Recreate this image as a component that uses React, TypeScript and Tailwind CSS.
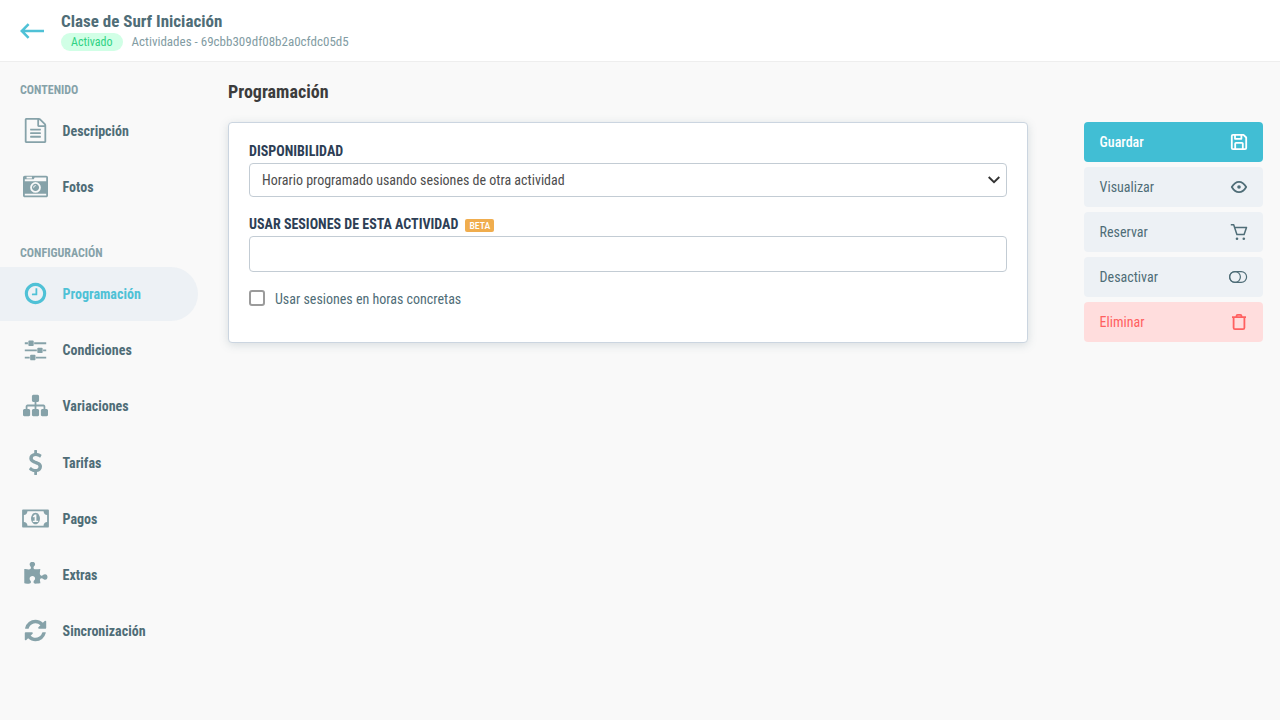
import type { ReactNode } from 'react';

const fileText =
  'M1596 380q28 28 48 76t20 88v1152q0 40-28 68t-68 28h-1344q-40 0-68-28t-28-68v-1600q0-40 28-68t68-28h896q40 0 88 20t76 48zm-444-244v376h376q-10-29-22-41l-313-313q-12-12-41-22zm384 1528v-1024h-416q-40 0-68-28t-28-68v-416h-768v1536h1280zm-1024-864q0-14 9-23t23-9h704q14 0 23 9t9 23v64q0 14-9 23t-23 9h-704q-14 0-23-9t-9-23v-64zm736 224q14 0 23 9t9 23v64q0 14-9 23t-23 9h-704q-14 0-23-9t-9-23v-64q0-14 9-23t23-9h704zm0 256q14 0 23 9t9 23v64q0 14-9 23t-23 9h-704q-14 0-23-9t-9-23v-64q0-14 9-23t23-9h704z';
const camera =
  'M928 832q0-14-9-23t-23-9q-66 0-113 47t-47 113q0 14 9 23t23 9 23-9 9-23q0-40 28-68t68-28q14 0 23-9t9-23zm224 130q0 106-75 181t-181 75-181-75-75-181 75-181 181-75 181 75 75 181zm-1024 574h1536v-128h-1536v128zm1152-574q0-159-112.5-271.5t-271.5-112.5-271.5 112.5-112.5 271.5 112.5 271.5 271.5 112.5 271.5-112.5 112.5-271.5zm-1024-642h384v-128h-384v128zm-128 192h1536v-256h-828l-64 128h-644v128zm1664-256v1280q0 53-37.5 90.5t-90.5 37.5h-1536q-53 0-90.5-37.5t-37.5-90.5v-1280q0-53 37.5-90.5t90.5-37.5h1536q53 0 90.5 37.5t37.5 90.5z';
const clock =
  'M1024 544v448q0 14-9 23t-23 9h-320q-14 0-23-9t-9-23v-64q0-14 9-23t23-9h224v-352q0-14 9-23t23-9h64q14 0 23 9t9 23zm416 352q0-148-73-273t-198-198-273-73-273 73-198 198-73 273 73 273 198 198 273 73 273-73 198-198 73-273zm224 0q0 209-103 385.5t-279.5 279.5-385.5 103-385.5-103-279.5-279.5-103-385.5 103-385.5 279.5-279.5 385.5-103 385.5 103 279.5 279.5 103 385.5z';
const sliders =
  'M480 1408v128h-352v-128h352zm352-128q26 0 45 19t19 45v256q0 26-19 45t-45 19h-256q-26 0-45-19t-19-45v-256q0-26 19-45t45-19h256zm160-384v128h-864v-128h864zm-640-512v128h-224v-128h224zm1312 1024v128h-736v-128h736zm-960-1152q26 0 45 19t19 45v256q0 26-19 45t-45 19h-256q-26 0-45-19t-19-45v-256q0-26 19-45t45-19h256zm640 512q26 0 45 19t19 45v256q0 26-19 45t-45 19h-256q-26 0-45-19t-19-45v-256q0-26 19-45t45-19h256zm320 128v128h-224v-128h224zm0-512v128h-864v-128h864z';
const sitemap =
  'M1792 1248v320q0 40-28 68t-68 28h-320q-40 0-68-28t-28-68v-320q0-40 28-68t68-28h96v-192h-512v192h96q40 0 68 28t28 68v320q0 40-28 68t-68 28h-320q-40 0-68-28t-28-68v-320q0-40 28-68t68-28h96v-192h-512v192h96q40 0 68 28t28 68v320q0 40-28 68t-68 28h-320q-40 0-68-28t-28-68v-320q0-40 28-68t68-28h96v-192q0-52 38-90t90-38h512v-192h-96q-40 0-68-28t-28-68v-320q0-40 28-68t68-28h320q40 0 68 28t28 68v320q0 40-28 68t-68 28h-96v192h512q52 0 90 38t38 90v192h96q40 0 68 28t28 68z';
const dollar =
  'M1362 1185q0 153-99.5 263.5t-258.5 136.5v175q0 14-9 23t-23 9h-135q-13 0-22.5-9.5t-9.5-22.5v-175q-66-9-127.5-31t-101.5-44.5-74-48-46.5-37.5-17.5-18q-17-21-2-41l103-135q7-10 23-12 15-2 24 9l2 2q113 99 243 125 37 8 74 8 81 0 142.5-43t61.5-122q0-28-15-53t-33.5-42-58.5-37.5-66-32-80-32.5q-39-16-61.5-25t-61.5-26.5-62.5-31-56.5-35.5-53.5-42.5-43.5-49-35.5-58-21-66.5-8.5-78q0-138 98-242t255-134v-180q0-13 9.5-22.5t22.5-9.5h135q14 0 23 9t9 23v176q57 6 110.5 23t87 33.5 63.5 37.5 39 29 15 14q17 18 5 38l-81 146q-8 15-23 16-14 3-27-7-3-3-14.5-12t-39-26.5-58.5-32-74.5-26-85.5-11.5q-95 0-155 43t-60 111q0 26 8.5 48t29.5 41.5 39.5 33 56 31 60.5 27 70 27.5q53 20 81 31.5t76 35 75.5 42.5 62 50 53 63.5 31.5 76.5 13 94z';
const money =
  'M768 1152h384v-96h-128v-448h-114l-148 137 77 80q42-37 55-57h2v288h-128v96zm512-256q0 70-21 142t-59.5 134-101.5 101-138 39-138-39-101.5-101-59.5-134-21-142 21-142 59.5-134 101.5-101 138-39 138 39 101.5 101 59.5 134 21 142zm512 256v-512q-106 0-181-75t-75-181h-1152q0 106-75 181t-181 75v512q106 0 181 75t75 181h1152q0-106 75-181t181-75zm128-832v1152q0 26-19 45t-45 19h-1792q-26 0-45-19t-19-45v-1152q0-26 19-45t45-19h1792q26 0 45 19t19 45z';
const puzzle =
  'M1755 1083q0 81-44.5 135t-123.5 54q-41 0-77.5-17.5t-59-38-56.5-38-71-17.5q-110 0-110 124 0 39 16 115t15 115v5q-22 0-33 1-34 3-97.5 11.5t-115.5 13.5-98 5q-61 0-103-26.5t-42-83.5q0-37 17.5-71t38-56.5 38-59 17.5-77.5q0-79-54-123.5t-135-44.5q-84 0-143 45.5t-59 127.5q0 43 15 83t33.5 64.5 33.5 53 15 50.5q0 45-46 89-37 35-117 35-95 0-245-24-9-2-27.5-4t-27.5-4l-13-2q-1 0-3-1-2 0-2-1v-1024q2 1 17.5 3.5t34 5 21.5 3.5q150 24 245 24 80 0 117-35 46-44 46-89 0-22-15-50.5t-33.5-53-33.5-64.5-15-83q0-82 59-127.5t144-45.5q80 0 134 44.5t54 123.5q0 41-17.5 77.5t-38 59-38 56.5-17.5 71q0 57 42 83.5t103 26.5q64 0 180-15t163-17v2q-1 2-3.5 17.5t-5 34-3.5 21.5q-24 150-24 245 0 80 35 117 44 46 89 46 22 0 50.5-15t53-33.5 64.5-33.5 83-15q82 0 127.5 59t45.5 143z';
const refresh =
  'M1639 1056q0 5-1 7-64 268-268 434.5t-478 166.5q-146 0-282.5-55t-243.5-157l-129 129q-19 19-45 19t-45-19-19-45v-448q0-26 19-45t45-19h448q26 0 45 19t19 45-19 45l-137 137q71 66 161 102t187 36q134 0 250-65t186-179q11-17 53-117 8-23 30-23h192q13 0 22.5 9.5t9.5 22.5zm25-800v448q0 26-19 45t-45 19h-448q-26 0-45-19t-19-45 19-45l138-138q-148-137-349-137-134 0-250 65t-186 179q-11 17-53 117-8 23-30 23h-199q-13 0-22.5-9.5t-9.5-22.5v-7q65-268 270-434.5t480-166.5q146 0 284 55.5t245 156.5l130-129q19-19 45-19t45 19 19 45z';

interface NavItemProps {
  icon: string;
  label: string;
  active?: boolean;
  wide?: boolean;
}

function NavItem({ icon, label, active, wide }: NavItemProps) {
  return (
    <a
      className={`flex h-[54px] w-[198px] items-center rounded-r-full pl-[22px] text-sm font-bold ${
        active ? 'bg-[#edf1f5] text-[#4fc1d6]' : 'text-[#4f6d77]'
      }`}
    >
      <span className="flex w-[27px] shrink-0 justify-center">
        <svg
          viewBox={wide ? '0 0 1920 1792' : '0 0 1792 1792'}
          className={`mb-px h-[25px] shrink-0 ${wide ? 'w-[27px]' : 'w-[25px]'} ${active ? 'text-[#4fc1d6]' : 'text-[#86a2a9]'}`}
          fill="currentColor"
        >
          <path d={icon} />
        </svg>
      </span>
      <span className="ml-[13.6px]">{label}</span>
    </a>
  );
}

interface ActionProps {
  label: string;
  color: string;
  children: ReactNode;
}

function Action({ label, color, children }: ActionProps) {
  return (
    <button className={`flex h-10 w-full items-center justify-between rounded pr-3.5 pl-[15.6px] text-sm ${color}`}>
      <span>{label}</span>
      <svg viewBox="0 0 20 20" className="size-5" fill="none" stroke="currentColor" strokeWidth="1.8" strokeLinejoin="round">
        {children}
      </svg>
    </button>
  );
}

export default function App() {
  return (
    <div className="flex h-screen flex-col bg-[#f9f9f9] font-['Roboto_Condensed','Roboto',sans-serif] [font-stretch:75%] antialiased">
      <header className="flex h-[62px] shrink-0 items-center border-b border-[#eeeeee] bg-white pl-5">
        <svg viewBox="0 0 24 16" className="h-4 w-6 text-[#4fc1d6]" fill="none" stroke="currentColor" strokeWidth="2.5">
          <path d="M24 8H2M8.6 1.2L1.8 8L8.6 14.8" />
        </svg>
        <div className="mb-0.5 ml-[17px]">
          <h1 className="text-[17px] leading-6 font-bold text-[#4f6d77]">Clase de Surf Iniciación</h1>
          <div className="flex items-center leading-[18px]">
            <span className="rounded-full bg-[#d1ffe6] px-2.5 text-xs leading-[18px] text-[#2fd283]">Activado</span>
            <span className="ml-[9px] text-[13px] text-[#829ca3]">Actividades - 69cbb309df08b2a0cfdc05d5</span>
          </div>
        </div>
      </header>

      <div className="flex flex-1">
        <nav className="w-[228px] shrink-0 pt-5">
          <h2 className="pl-5 text-xs leading-4 font-bold text-[#86a2a9]">CONTENIDO</h2>
          <div className="mt-1.5 flex flex-col gap-[2px]">
            <NavItem icon={fileText} label="Descripción" />
            <NavItem icon={camera} label="Fotos" />
          </div>
          <h2 className="mt-[31px] pl-5 text-xs leading-4 font-bold text-[#86a2a9]">CONFIGURACIÓN</h2>
          <div className="mt-[5.9px] flex flex-col gap-[2.28px]">
            <NavItem icon={clock} label="Programación" active />
            <NavItem icon={sliders} label="Condiciones" />
            <NavItem icon={sitemap} label="Variaciones" />
            <NavItem icon={dollar} label="Tarifas" />
            <NavItem icon={money} label="Pagos" wide />
            <NavItem icon={puzzle} label="Extras" />
            <NavItem icon={refresh} label="Sincronización" />
          </div>
        </nav>

        <main className="w-[800px] shrink-0 pt-[18px]">
          <h2 className="text-lg leading-6 font-bold text-[#3c3c3c]">Programación</h2>
          <section className="mt-[18px] h-[221px] rounded border border-[#cbd5e0] bg-white px-5 pt-5 shadow-[0_2px_10px_rgba(79,109,119,0.2)]">
            <label className="block h-5 text-sm leading-4 font-bold text-[#2d3e55]">DISPONIBILIDAD</label>
            <div className="flex h-[34px] items-center justify-between rounded border border-[#c3ccd4] pr-1.5 pl-3 text-sm text-[#4d4d4d]">
              <span>Horario programado usando sesiones de otra actividad</span>
              <svg viewBox="0 0 12 8" className="mb-px h-2 w-3 text-[#333]" fill="none" stroke="currentColor" strokeWidth="1.9">
                <path d="M0.7 1L6 6.2L11.3 1" />
              </svg>
            </div>
            <label className="mt-[19px] flex h-5 items-start text-sm leading-4 font-bold text-[#2d3e55]">
              USAR SESIONES DE ESTA ACTIVIDAD
              <span className="mt-[3px] ml-[7px] rounded-xs bg-[#f0ad4e] px-1 text-[9.8px] leading-[13px] font-medium text-white">BETA</span>
            </label>
            <input className="block h-9 w-full rounded border border-[#c3ccd4] px-3 text-sm" />
            <label className="mt-[18px] flex items-start text-sm leading-[18px] text-[#4f6d77]">
              <span className="mr-2.5 size-4 rounded-[3px] border-2 border-[#9b9b9b] bg-white" />
              Usar sesiones en horas concretas
            </label>
          </section>
        </main>

        <aside className="ml-14 flex w-[179px] shrink-0 flex-col gap-[5px] pt-[60px]">
          <Action label="Guardar" color="bg-[#41bed4] text-white font-medium">
            <path d="M4 2.8h10.5L17.2 5.5V16q0 1.2-1.2 1.2H4q-1.2 0-1.2-1.2V4q0-1.2 1.2-1.2zM6 3v3.8h6.4V3M6.2 17v-5.4q0-.8.8-.8h6q.8 0 .8.8V17" />
          </Action>
          <Action label="Visualizar" color="bg-[#edf1f5] text-[#4f6d77]">
            <path d="M2.8 10q3-5.2 7.2-5.2t7.2 5.2q-3 5.2-7.2 5.2T2.8 10z" />
            <circle cx="10" cy="10" r="1.8" fill="currentColor" stroke="none" />
          </Action>
          <Action label="Reservar" color="bg-[#edf1f5] text-[#4f6d77]">
            <g strokeWidth="1.5">
              <path d="M1.8 2.8h2.9l3.2 9.7h7.2l2.4-7H5.6" />
            </g>
            <circle cx="8" cy="16.8" r="1.3" fill="currentColor" stroke="none" />
            <circle cx="14.8" cy="16.8" r="1.3" fill="currentColor" stroke="none" />
          </Action>
          <Action label="Desactivar" color="bg-[#edf1f5] text-[#4f6d77]">
            <g strokeWidth="1.2">
              <rect x="0.6" y="4.6" width="17" height="10.8" rx="5.4" />
              <circle cx="6" cy="10" r="5.4" />
            </g>
          </Action>
          <Action label="Eliminar" color="bg-[#ffdddd] text-[#ff6060]">
            <path d="M3 5.2h14M4.6 5.2v10.6q0 1.4 1.4 1.4h8q1.4 0 1.4-1.4V5.2M7.5 5.2V4q0-1.2 1.2-1.2h2.6q1.2 0 1.2 1.2v1.2" />
          </Action>
        </aside>
      </div>
    </div>
  );
}
